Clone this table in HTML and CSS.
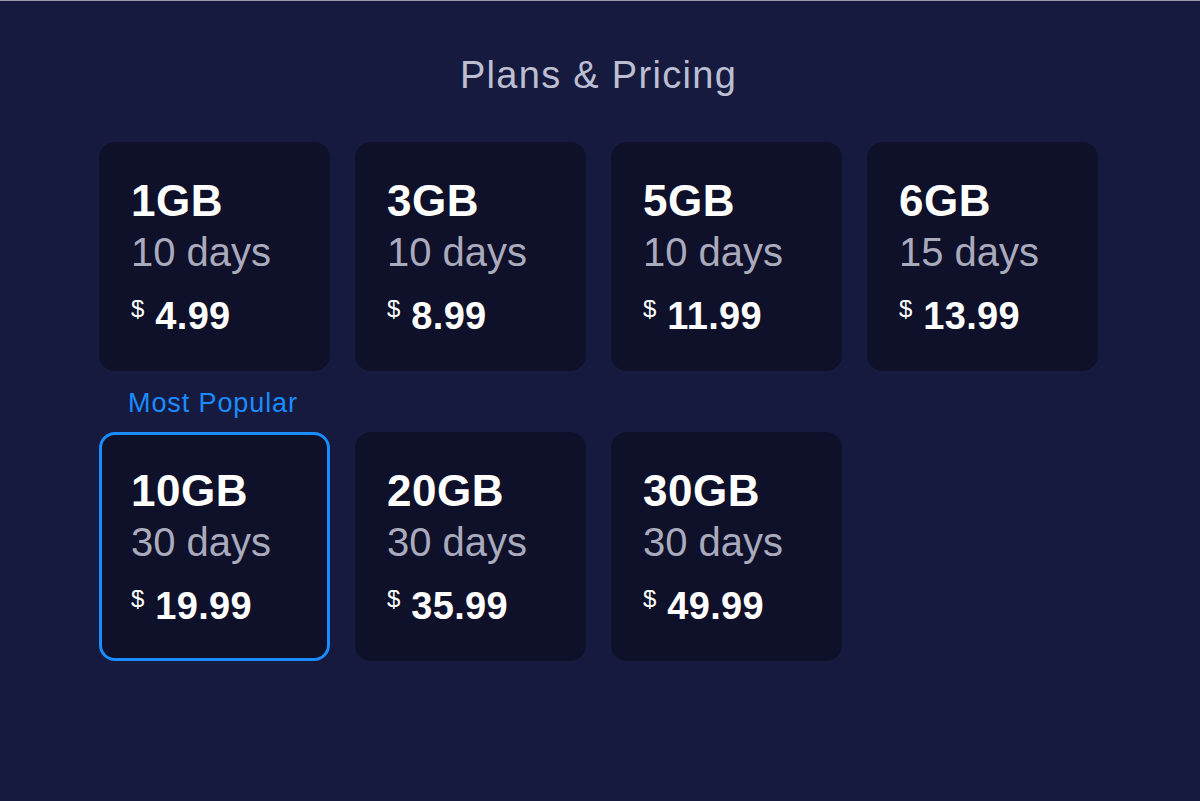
FILE: index.html
```html
<!DOCTYPE html>
<html>
<head>
<meta charset="utf-8">
<link rel="stylesheet" href="styles.css">
</head>
<body>
<main class="page">
  <h1 class="title">Plans &amp; Pricing</h1>
  <div class="grid">
    <div class="card"><div class="gb">1GB</div><div class="days">10 days</div><div class="price"><span class="cur">$</span><span class="amt">4.99</span></div></div>
    <div class="card"><div class="gb">3GB</div><div class="days">10 days</div><div class="price"><span class="cur">$</span><span class="amt">8.99</span></div></div>
    <div class="card"><div class="gb">5GB</div><div class="days">10 days</div><div class="price"><span class="cur">$</span><span class="amt">11.99</span></div></div>
    <div class="card"><div class="gb">6GB</div><div class="days">15 days</div><div class="price"><span class="cur">$</span><span class="amt">13.99</span></div></div>
    <div class="card popular"><span class="badge">Most Popular</span><div class="gb">10GB</div><div class="days">30 days</div><div class="price"><span class="cur">$</span><span class="amt">19.99</span></div></div>
    <div class="card"><div class="gb">20GB</div><div class="days">30 days</div><div class="price"><span class="cur">$</span><span class="amt">35.99</span></div></div>
    <div class="card"><div class="gb">30GB</div><div class="days">30 days</div><div class="price"><span class="cur">$</span><span class="amt">49.99</span></div></div>
  </div>
</main>
</body>
</html>
```
FILE: styles.css
```css
* { box-sizing: border-box; }
html, body { margin: 0; padding: 0; }
body {
  background: #171a3f;
  border-top: 1px solid #9a9cae;
  font-family: "Liberation Sans", Arial, sans-serif;
  height: 801px;
  overflow: hidden;
}
.page {
  display: flex;
  flex-direction: column;
  align-items: center;
  padding-right: 3px;
}
.title {
  margin: 51px 0 0 0;
  font-size: 38px;
  line-height: 46px;
  font-weight: 400;
  letter-spacing: 1.3px;
  color: #bcbfd2;
}
.grid {
  margin-top: 44px;
  display: grid;
  grid-template-columns: repeat(4, 231px);
  grid-auto-rows: 229px;
  column-gap: 25px;
  row-gap: 61px;
}
.card {
  position: relative;
  background: #0f1029;
  border-radius: 16px;
  padding: 34px 0 0 32px;
  color: #ffffff;
}
.card.popular {
  border: 3px solid #1a8cff;
  padding: 31px 0 0 29px;
}
.badge {
  position: absolute;
  left: 26px;
  top: -48px;
  font-size: 27px;
  line-height: 32px;
  letter-spacing: 0.9px;
  color: #1a8cff;
  white-space: nowrap;
}
.gb {
  font-size: 44px;
  line-height: 50px;
  font-weight: 700;
  letter-spacing: 0.5px;
}
.days {
  font-size: 40px;
  line-height: 44px;
  color: #a9abbd;
  margin-top: 4px;
}
.price {
  margin-top: 20px;
  display: flex;
  align-items: flex-start;
  gap: 11px;
}
.cur {
  font-size: 24px;
  line-height: 30px;
}
.amt {
  font-size: 38px;
  line-height: 44px;
  font-weight: 700;
  letter-spacing: 0.3px;
}
```
